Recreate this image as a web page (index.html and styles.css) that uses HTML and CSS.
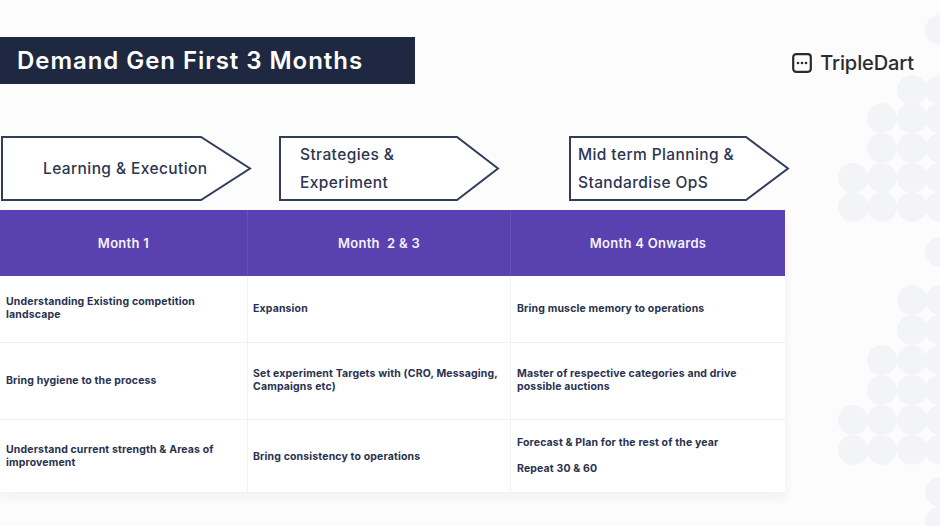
FILE: index.html
```html
<!DOCTYPE html>
<html lang="en">
<head>
<meta charset="utf-8">
<title>Demand Gen First 3 Months</title>
<link rel="stylesheet" href="styles.css">
</head>
<body>
<div class="slide">
  <svg class="pattern" width="120" height="526" viewBox="820 0 120 526" aria-hidden="true">
    <g fill="#f3f4f8">
      <circle cx="940" cy="30" r="15"/>
      <circle cx="912" cy="90" r="15"/><circle cx="940" cy="90" r="15"/>
      <circle cx="882" cy="118" r="15"/><circle cx="912" cy="118" r="15"/><circle cx="940" cy="118" r="15"/>
      <circle cx="882" cy="148" r="15"/><circle cx="912" cy="148" r="15"/><circle cx="940" cy="148" r="15"/>
      <circle cx="853" cy="178" r="15"/><circle cx="882" cy="178" r="15"/><circle cx="912" cy="178" r="15"/><circle cx="940" cy="178" r="15"/>
      <circle cx="853" cy="207" r="15"/><circle cx="882" cy="207" r="15"/><circle cx="912" cy="207" r="15"/><circle cx="940" cy="207" r="15"/>
      <circle cx="940" cy="252" r="15"/>
      <circle cx="912" cy="300" r="15"/><circle cx="940" cy="300" r="15"/>
      <circle cx="912" cy="330" r="15"/><circle cx="940" cy="330" r="15"/>
      <circle cx="882" cy="360" r="15"/><circle cx="912" cy="360" r="15"/><circle cx="940" cy="360" r="15"/>
      <circle cx="882" cy="390" r="15"/><circle cx="912" cy="390" r="15"/><circle cx="940" cy="390" r="15"/>
      <circle cx="853" cy="420" r="15"/><circle cx="882" cy="420" r="15"/><circle cx="912" cy="420" r="15"/><circle cx="940" cy="420" r="15"/>
      <circle cx="853" cy="450" r="15"/><circle cx="882" cy="450" r="15"/><circle cx="912" cy="450" r="15"/><circle cx="940" cy="450" r="15"/>
      <circle cx="940" cy="492" r="15"/>
      <circle cx="940" cy="522" r="15"/>
    </g>
  </svg>

  <header class="top">
    <h1 class="title">Demand Gen First 3 Months</h1>
    <div class="logo">
      <svg class="logo-icon" width="20" height="20" viewBox="0 0 20 20" aria-hidden="true">
        <rect x="1.2" y="1.2" width="17.6" height="17.6" rx="3" fill="none" stroke="#2b2b2f" stroke-width="2.2"/>
        <circle cx="6" cy="10" r="1.3" fill="#2b2b2f"/>
        <circle cx="10" cy="10" r="1.3" fill="#2b2b2f"/>
        <circle cx="14" cy="10" r="1.3" fill="#2b2b2f"/>
      </svg>
      <span class="logo-text">TripleDart</span>
    </div>
  </header>

  <section class="phases">
    <div class="phase phase-1">
      <svg class="phase-shape" width="251" height="65" viewBox="0 0 251 65" aria-hidden="true">
        <polygon points="1,1 200,1 249,32.5 200,64 1,64" fill="#fff" stroke="#323d5d" stroke-width="2"/>
      </svg>
      <span class="phase-text">Learning &amp; Execution</span>
    </div>
    <div class="phase phase-2">
      <svg class="phase-shape" width="221" height="65" viewBox="0 0 221 65" aria-hidden="true">
        <polygon points="1,1 178,1 219,32.5 178,64 1,64" fill="#fff" stroke="#323d5d" stroke-width="2"/>
      </svg>
      <span class="phase-text">Strategies &amp;<br>Experiment</span>
    </div>
    <div class="phase phase-3">
      <svg class="phase-shape" width="221" height="65" viewBox="0 0 221 65" aria-hidden="true">
        <polygon points="1,1 177,1 219,32.5 177,64 1,64" fill="#fff" stroke="#323d5d" stroke-width="2"/>
      </svg>
      <span class="phase-text">Mid term Planning &amp;<br>Standardise OpS</span>
    </div>
  </section>

  <section class="plan">
    <div class="head">Month 1</div>
    <div class="head">Month&nbsp; 2 &amp; 3</div>
    <div class="head">Month 4 Onwards</div>

    <div class="cell row-1 c1">Understanding Existing competition<br>landscape</div>
    <div class="cell row-1 c2">Expansion</div>
    <div class="cell row-1 c3">Bring muscle memory to operations</div>

    <div class="cell row-2 c1">Bring hygiene to the process</div>
    <div class="cell row-2 c2">Set experiment Targets with (CRO, Messaging,<br>Campaigns etc)</div>
    <div class="cell row-2 c3">Master of respective categories and drive<br>possible auctions</div>

    <div class="cell row-3 c1">Understand current strength &amp; Areas of<br>improvement</div>
    <div class="cell row-3 c2">Bring consistency to operations</div>
    <div class="cell row-3 c3 stack"><span>Forecast &amp; Plan for the rest of the year</span><span>Repeat 30 &amp; 60</span></div>
  </section>
</div>
</body>
</html>
```

FILE: styles.css
```css
* { box-sizing: border-box; }

html, body {
  margin: 0;
  padding: 0;
  background: #fcfcfd;
}

body {
  font-family: Inter, "Liberation Sans", sans-serif;
  color: #27304d;
}

.slide {
  position: relative;
  width: 940px;
  height: 526px;
  overflow: hidden;
}

.pattern {
  position: absolute;
  top: 0;
  right: 0;
  z-index: 0;
}

.top {
  position: relative;
  z-index: 1;
  display: flex;
  justify-content: space-between;
  align-items: flex-start;
  padding-top: 37px;
}

.title {
  margin: 0;
  width: 415px;
  height: 47px;
  padding-left: 17px;
  background: #1e2840;
  color: #ffffff;
  font-size: 24px;
  line-height: 47px;
  font-weight: 600;
  letter-spacing: 0.95px;
}

.logo {
  display: flex;
  align-items: center;
  gap: 8px;
  margin-top: 14px;
  margin-right: 26px;
}

.logo-icon { display: block; }

.logo-text {
  font-size: 20px;
  font-weight: 500;
  color: #2b2b2f;
  letter-spacing: -0.1px;
}

.phases {
  position: relative;
  z-index: 1;
  display: flex;
  margin-top: 52px;
  height: 65px;
}

.phase {
  position: relative;
  height: 65px;
  display: flex;
  align-items: center;
}

.phase-shape {
  position: absolute;
  inset: 0;
  z-index: 0;
}

.phase-text {
  position: relative;
  z-index: 1;
  font-size: 15.5px;
  font-weight: 500;
  line-height: 28px;
  letter-spacing: 0.4px;
  color: #2d3550;
}

.phase-1 { width: 251px; margin-left: 1px; padding-left: 42px; }
.phase-2 { width: 221px; margin-left: 27px; padding-left: 21px; }
.phase-3 { width: 221px; margin-left: 69px; padding-left: 9px; }

.plan {
  position: relative;
  z-index: 1;
  display: grid;
  grid-template-columns: 247px 263px 275px;
  grid-template-rows: 66px 67px 77px 72px;
  width: 785px;
  margin-top: 9px;
  background: #ffffff;
  box-shadow: 0 6px 10px rgba(30, 40, 80, 0.05);
}

.head {
  display: flex;
  align-items: center;
  justify-content: center;
  background: #5a41b0;
  color: #f4f2fb;
  font-size: 13px;
  font-weight: 600;
  letter-spacing: 0.3px;
  border-left: 1px solid #6651ba;
}

.head:first-child { border-left: none; }

.cell {
  display: flex;
  align-items: center;
  font-size: 10.5px;
  font-weight: 700;
  line-height: 13px;
  letter-spacing: 0.15px;
  color: #29324f;
  border-bottom: 1px solid #f1f1f5;
  border-left: 1px solid #f3f3f6;
}

.c1 { padding-left: 6px; border-left: none; }
.c2 { padding-left: 5px; }
.c3 { padding-left: 6px; }

.row-1 { padding-bottom: 2px; }
.row-2 { padding-bottom: 2px; }
.row-3 { border-bottom: none; }

.stack {
  flex-direction: column;
  align-items: flex-start;
  justify-content: center;
  gap: 13px;
  padding-bottom: 2px;
}
```
